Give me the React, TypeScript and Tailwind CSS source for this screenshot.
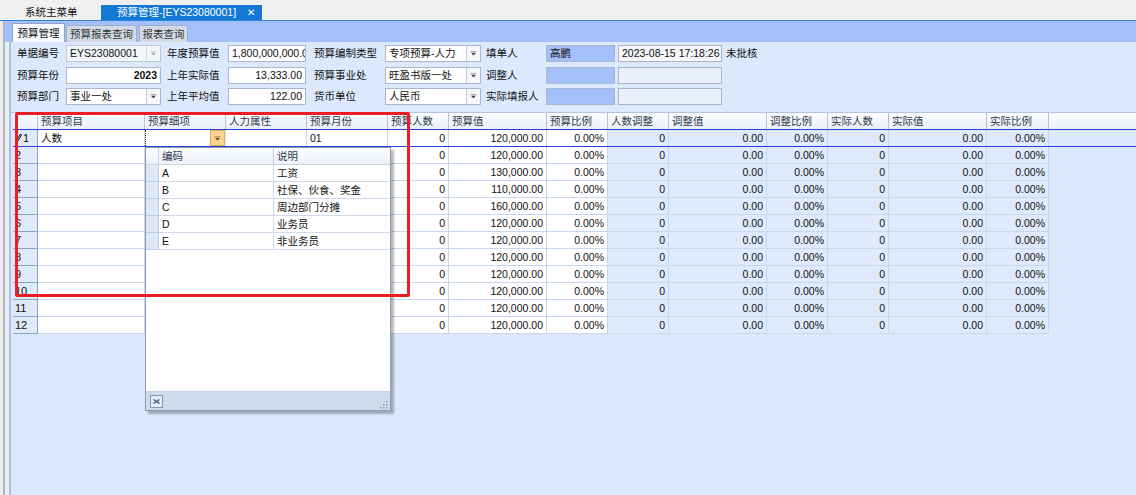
import React from 'react';

const FONT = "font-['Liberation_Sans','Noto_Sans_CJK_SC',sans-serif]";

type Col = { w: string; h: string; right: boolean; blue: boolean };

const cols: Col[] = [
  { w: 'w-[107px]', h: '预算项目', right: false, blue: false },
  { w: 'w-[81px]', h: '预算细项', right: false, blue: false },
  { w: 'w-[81px]', h: '人力属性', right: false, blue: false },
  { w: 'w-[81px]', h: '预算月份', right: false, blue: false },
  { w: 'w-[61px]', h: '预算人数', right: true, blue: false },
  { w: 'w-[98px]', h: '预算值', right: true, blue: false },
  { w: 'w-[61px]', h: '预算比例', right: true, blue: false },
  { w: 'w-[61px]', h: '人数调整', right: true, blue: true },
  { w: 'w-[98px]', h: '调整值', right: true, blue: true },
  { w: 'w-[61px]', h: '调整比例', right: true, blue: true },
  { w: 'w-[61px]', h: '实际人数', right: true, blue: true },
  { w: 'w-[98px]', h: '实际值', right: true, blue: true },
  { w: 'w-[62px]', h: '实际比例', right: true, blue: true },
];

const values = [
  '120,000.00', '120,000.00', '130,000.00', '110,000.00', '160,000.00', '120,000.00',
  '120,000.00', '120,000.00', '120,000.00', '120,000.00', '120,000.00', '120,000.00',
];

const rows = values.map((v, i) => [
  i === 0 ? '人数' : '', '', '', i === 0 ? '01' : '', '0', v, '0.00%', '0', '0.00', '0.00%', '0', '0.00', '0.00%',
]);

const popupRows = [
  ['A', '工资'],
  ['B', '社保、伙食、奖金'],
  ['C', '周边部门分摊'],
  ['D', '业务员'],
  ['E', '非业务员'],
];

function Tri({ color = '#4a4a4a' }: { color?: string }) {
  return (
    <svg width="7" height="5" viewBox="0 0 7 5">
      <rect x="0.5" y="0" width="6" height="0.8" fill={color} opacity="0.5" />
      <polygon points="1,1.8 6,1.8 3.5,4.5" fill={color} />
    </svg>
  );
}

function Label({ w, children }: { w: string; children: React.ReactNode }) {
  return <div className={`${w} shrink-0 h-[17px] flex items-center text-[#111] whitespace-nowrap`}>{children}</div>;
}

function Box({ w, children, className = '' }: { w: string; children?: React.ReactNode; className?: string }) {
  return (
    <div className={`${w} shrink-0 h-[17px] border border-[#a8b8cf] flex items-center px-[3px] overflow-hidden whitespace-nowrap ${className}`}>
      {children}
    </div>
  );
}

function Combo({ w, text, disabled = false }: { w: string; text: string; disabled?: boolean }) {
  return (
    <div className={`${w} shrink-0 h-[17px] border ${disabled ? 'border-[#bcc7d6] bg-[#f3f6fa]' : 'border-[#a8b8cf] bg-white'} flex items-stretch overflow-hidden`}>
      <div className="flex-1 flex items-center px-[3px] whitespace-nowrap text-[#111]">{text}</div>
      <div className={`w-[14px] border-l ${disabled ? 'border-[#d3dae4] bg-[#f3f6fa]' : 'border-[#c2cbd8] bg-[#f5f7fa]'} flex items-center justify-center`}>
        <Tri color={disabled ? '#9aa3ae' : '#444'} />
      </div>
    </div>
  );
}

function Pencil() {
  return (
    <svg width="7" height="11" viewBox="0 0 7 11" className="mr-[1px]">
      <path d="M1 10 L1.6 7.4 L5.4 1 L6.6 1.8 L2.8 8.2 Z" fill="none" stroke="#111" strokeWidth="1" />
      <path d="M1 10 L2.4 8.6" stroke="#111" strokeWidth="1.2" />
    </svg>
  );
}

export default function App() {
  return (
    <div className={`relative w-[1136px] h-[495px] overflow-hidden bg-[#f0f0f0] text-[10.5px] leading-none ${FONT}`}>
      {/* top tab bar */}
      <div className="h-[20px] flex items-end">
        <div className="w-[101px] h-[15px] flex items-center pl-[25px] text-[#111]">系统主菜单</div>
        <div className="w-[161px] h-[15px] bg-[#1479d6] flex items-center pl-[16px] text-white">
          <span className="w-[130px]">预算管理-[EYS23080001]</span>
          <span className="text-[10px]">✕</span>
        </div>
      </div>
      <div className="h-[1px] bg-[#2a84d8]" />

      <div className="flex h-[474px]">
        <div className="w-[3px] bg-[#eeeeee]" />
        <div className="w-[2px] bg-[#b3b6bb]" />
        <div className="flex-1 flex flex-col">
          {/* sub tabs band */}
          <div className="h-[21px] bg-[#a3c0fb] flex items-end pl-[7px] gap-[1px]">
            <div className="w-[53px] h-[19px] bg-[#f7faff] border border-b-0 border-[#8ea3c6] flex items-center justify-center text-[#111]">预算管理</div>
            <div className="w-[71px] h-[17px] bg-[#d3dae5] border border-b-0 border-[#9fb0c8] flex items-center justify-center text-[#333]">预算报表查询</div>
            <div className="ml-[1px] w-[49px] h-[17px] bg-[#d3dae5] border border-b-0 border-[#9fb0c8] flex items-center justify-center text-[#333]">报表查询</div>
          </div>

          <div className="flex-1 flex">
            <div className="w-[4px] bg-[#e8eef7]" />
            <div className="w-[2px] bg-[#a9c0e0]" />
            <div className="flex-1 bg-[#dce9fc] flex flex-col">
              {/* form */}
              <div className="pt-[3px] pl-[6px] flex flex-col gap-[4.5px]">
                <div className="flex items-center">
                  <Label w="w-[49px]">单据编号</Label>
                  <Combo w="w-[95px]" text="EYS23080001" disabled />
                  <div className="w-[6px]" />
                  <Label w="w-[61px]">年度预算值</Label>
                  <Box w="w-[78px]" className="bg-white text-[#111]">1,800,000,000.00</Box>
                  <div className="w-[8px]" />
                  <Label w="w-[71px]">预算编制类型</Label>
                  <Combo w="w-[96px]" text="专项预算-人力" />
                  <div className="w-[5px]" />
                  <Label w="w-[60px]">填单人</Label>
                  <Box w="w-[69px]" className="bg-[#a3c0fa] border-[#8ea9d6] text-[#111]">高鹏</Box>
                  <div className="w-[3px]" />
                  <Box w="w-[104px]" className="bg-[#f4f6f9] border-[#a9b6c8] text-[#111]">2023-08-15 17:18:26</Box>
                  <div className="w-[4px]" />
                  <Label w="w-[40px]">未批核</Label>
                </div>
                <div className="flex items-center">
                  <Label w="w-[49px]">预算年份</Label>
                  <Box w="w-[95px]" className="bg-white justify-end font-bold text-[#111]">2023</Box>
                  <div className="w-[6px]" />
                  <Label w="w-[61px]">上年实际值</Label>
                  <Box w="w-[78px]" className="bg-white justify-end text-[#111]">13,333.00</Box>
                  <div className="w-[8px]" />
                  <Label w="w-[71px]">预算事业处</Label>
                  <Combo w="w-[96px]" text="旺盈书版一处" />
                  <div className="w-[5px]" />
                  <Label w="w-[60px]">调整人</Label>
                  <Box w="w-[69px]" className="bg-[#a3c0fa] border-[#8ea9d6]" />
                  <div className="w-[3px]" />
                  <Box w="w-[104px]" className="bg-[#eaf0f9] border-[#a9b6c8]" />
                </div>
                <div className="flex items-center">
                  <Label w="w-[49px]">预算部门</Label>
                  <Combo w="w-[95px]" text="事业一处" />
                  <div className="w-[6px]" />
                  <Label w="w-[61px]">上年平均值</Label>
                  <Box w="w-[78px]" className="bg-white justify-end text-[#111]">122.00</Box>
                  <div className="w-[8px]" />
                  <Label w="w-[71px]">货币单位</Label>
                  <Combo w="w-[96px]" text="人民币" />
                  <div className="w-[5px]" />
                  <Label w="w-[60px]">实际填报人</Label>
                  <Box w="w-[69px]" className="bg-[#a3c0fa] border-[#8ea9d6]" />
                  <div className="w-[3px]" />
                  <Box w="w-[104px]" className="bg-[#eaf0f9] border-[#a9b6c8]" />
                </div>
              </div>

              {/* grid */}
              <div className="mt-[7px] pl-[2px] border-t border-[#b4c6de]">
                {/* header */}
                <div className="flex h-[17px] border-b border-[#2b3fd6] bg-gradient-to-b from-[#fcfdff] to-[#eaf0f8]">
                  <div className="w-[25px] shrink-0 border-r border-[#b3c4da]" />
                  {cols.map((c) => (
                    <div key={c.h} className={`${c.w} shrink-0 border-r border-[#b3c4da] flex items-center pl-[3px] text-[#2e3a4c] whitespace-nowrap overflow-hidden`}>
                      {c.h}
                    </div>
                  ))}
                  <div className="flex-1" />
                </div>
                {/* rows */}
                {rows.map((r, i) => {
                  const sel = i === 0;
                  return (
                    <div key={i} className={`flex h-[17px] ${sel ? 'border-b border-[#2b3fd6]' : ''}`}>
                      <div className={`w-[25px] shrink-0 bg-[#dfe9f7] border-r border-[#8ba4c6] ${sel ? '' : 'border-b'} flex items-center pl-[2px] text-[#111] text-[11px]`}>
                        {sel ? (
                          <>
                            <Pencil />
                            <span>1</span>
                          </>
                        ) : (
                          <span>{i + 1}</span>
                        )}
                      </div>
                      {cols.map((c, j) => {
                        if (sel && j === 1) {
                          return (
                            <div key={j} className={`${c.w} shrink-0 bg-white border-l border-dotted border-l-[#222] border-r border-r-[#c7d7ee] flex items-stretch justify-end`}>
                              <div className="w-[15px] bg-[#fcd68c] border border-[#e2ad4e] flex items-center justify-center">
                                <Tri color="#5a4a2a" />
                              </div>
                            </div>
                          );
                        }
                        return (
                          <div
                            key={j}
                            className={`${c.w} shrink-0 ${c.blue ? 'bg-[#dfeafc]' : 'bg-white'} border-r border-[#c7d7ee] ${sel ? '' : 'border-b'} flex items-center ${c.right ? 'justify-end pr-[3px]' : 'pl-[3px]'} text-[#111] whitespace-nowrap overflow-hidden`}
                          >
                            {r[j]}
                          </div>
                        );
                      })}
                      <div className="flex-1" />
                    </div>
                  );
                })}
              </div>
            </div>
          </div>
        </div>
      </div>

      {/* dropdown popup */}
      <div className="absolute left-[145px] top-[147px] w-[246px] h-[264px] bg-white border border-[#8d9cb3] shadow-[3px_3px_2px_rgba(0,0,0,0.28)] flex flex-col">
        <div className="flex h-[17px] bg-gradient-to-b from-[#fbfcfe] to-[#edf2f9] border-b border-[#c6d4e6]">
          <div className="w-[13px] shrink-0 border-r border-[#c6d4e6]" />
          <div className="w-[115px] shrink-0 border-r border-[#c6d4e6] flex items-center pl-[3px] text-[#2e3a4c]">编码</div>
          <div className="flex-1 flex items-center pl-[3px] text-[#2e3a4c]">说明</div>
        </div>
        {popupRows.map((p) => (
          <div key={p[0]} className="flex h-[17px]">
            <div className="w-[13px] shrink-0 bg-[#dfe8f5] border-r border-b border-[#bccce2]" />
            <div className="w-[115px] shrink-0 border-r border-b border-[#cfdbeb] flex items-center pl-[3px] text-[#111]">{p[0]}</div>
            <div className="flex-1 border-b border-[#cfdbeb] flex items-center pl-[3px] text-[#111]">{p[1]}</div>
          </div>
        ))}
        <div className="flex-1" />
        <div className="h-[19px] bg-[#cfdcee] border-t border-[#c3d1e4] flex items-center justify-between pl-[4px] pr-[2px]">
          <div className="w-[13px] h-[13px] border border-[#7f97ba] bg-[#e3ebf6] flex items-center justify-center">
            <svg width="7" height="5" viewBox="0 0 7 5">
              <path d="M0.5 0.5 L6.5 4.5 M6.5 0.5 L0.5 4.5" stroke="#46577a" strokeWidth="1.3" />
            </svg>
          </div>
          <svg width="8" height="8" viewBox="0 0 8 8" className="self-end mb-[1px]">
            <rect x="6" y="0" width="1.5" height="1.5" fill="#8a9bb5" />
            <rect x="3" y="3" width="1.5" height="1.5" fill="#8a9bb5" />
            <rect x="6" y="3" width="1.5" height="1.5" fill="#8a9bb5" />
            <rect x="0" y="6" width="1.5" height="1.5" fill="#8a9bb5" />
            <rect x="3" y="6" width="1.5" height="1.5" fill="#8a9bb5" />
            <rect x="6" y="6" width="1.5" height="1.5" fill="#8a9bb5" />
          </svg>
        </div>
      </div>

      {/* red annotation rectangle */}
      <div className="absolute left-[15px] top-[112px] w-[395px] h-[185px] border-[3px] border-[#ec1c24] rounded-[2px] pointer-events-none" />
    </div>
  );
}
